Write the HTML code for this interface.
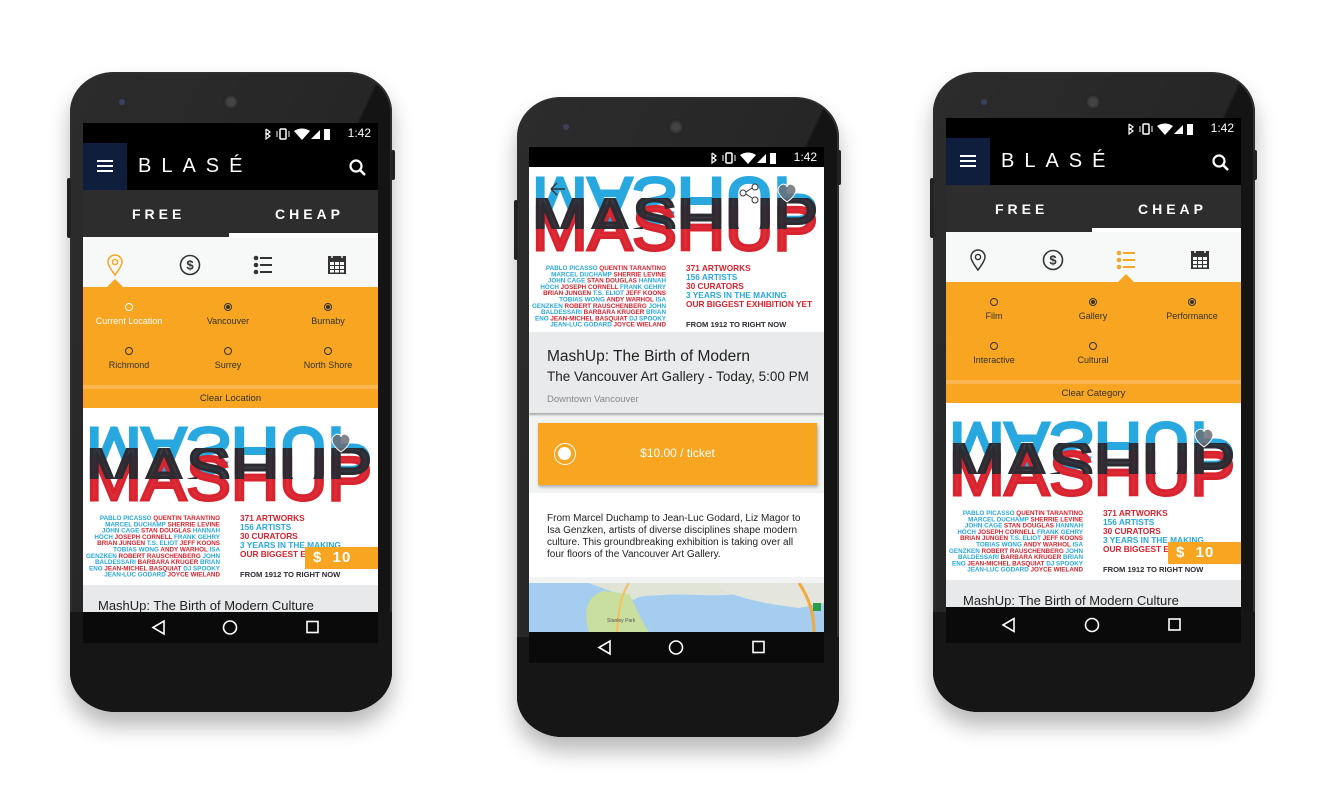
<!DOCTYPE html>
<html><head><meta charset="utf-8">
<style>
*{margin:0;padding:0;box-sizing:border-box}
body{width:1325px;height:803px;background:#fff;position:relative;overflow:hidden;font-family:"Liberation Sans",sans-serif}
.phone{position:absolute;width:322px;height:640px;border-radius:44px 44px 46px 46px/40px 40px 40px 40px;background:linear-gradient(115deg,#2c2c2c 0%,#262626 50%,#141414 50.5%,#141414 100%);box-shadow:0 14px 22px rgba(0,0,0,.28),inset 0 0 0 2px #2e2e2e}
.phone .bot{position:absolute;left:0;right:0;bottom:0;height:100px;border-radius:0 0 46px 46px/0 0 40px 40px;background:#161616}
.spk{position:absolute;width:16px;height:16px;border-radius:50%;background:radial-gradient(#444 30%,#222 70%)}
.cam{position:absolute;width:6px;height:6px;border-radius:50%;background:#3a4060}
.btn{position:absolute;width:4px;background:#222;border-radius:2px}
.scr{position:absolute;width:295px;overflow:hidden;background:#fff}
.abs{position:absolute}
.sb{position:absolute;left:0;top:0;width:295px;height:20px;background:#000;color:#fff;font-size:12px}
.sb .t{position:absolute;right:7px;top:3px}
.ab{position:absolute;left:0;top:20px;width:295px;height:47px;background:#000}
.ham{position:absolute;left:0;top:0;width:44px;height:47px;background:#0f1e3c}
.ham i{position:absolute;left:14px;width:16px;height:2px;background:#fff}
.logo{position:absolute;left:55px;top:12px;color:#fff;font-size:20px;letter-spacing:10px;font-weight:normal}
.tabs{position:absolute;left:0;top:67px;width:295px;height:47px;background:#2d2d2d;color:#fff;font-weight:bold;font-size:14px;letter-spacing:4px}
.tabs span{position:absolute;top:16px}
.tabs .ul{position:absolute;left:146px;bottom:0;width:149px;height:4px;background:#fff}
.ic{position:absolute;left:0;top:114px;width:295px;height:50px;background:#f7f8f8}
.or{position:absolute;left:0;top:164px;width:295px;height:121px;background:#f8a521}
.opt{position:absolute;width:100px;text-align:center;font-size:9px;color:#333}
.opt b{display:block;margin:0 auto 5px;width:8px;height:8px;border:1px solid #333;border-radius:50%;position:relative}
.opt b.on:after{content:"";position:absolute;left:1px;top:1px;width:4px;height:4px;border-radius:50%;background:#333}
.clr{position:absolute;left:0;top:98px;width:295px;height:23px;border-top:4px solid #fab451;text-align:center;font-size:9.5px;color:#333;line-height:19px}
.nav{position:absolute;left:0;width:295px;height:31px;background:#0a0a0a}
.ttl{position:absolute;left:0;width:295px;background:#e8e9ea;font-size:13px;color:#222}
.tag{position:absolute;background:#f8a521;color:#fff;font-weight:bold;font-size:15px;letter-spacing:1px}
</style></head><body>

<!-- ============ PHONE 1 ============ -->
<div class="phone" style="left:70px;top:72px"><div class="bot"></div>
<div class="cam" style="left:49px;top:27px"></div><div class="spk" style="left:153px;top:22px"></div>
</div>
<div class="btn" style="left:391px;top:150px;height:30px"></div>
<div class="btn" style="left:67px;top:178px;height:60px"></div>
<div class="scr" style="left:83px;top:123px;height:520px">
 <div class="sb"><svg class="abs" style="left:178px;top:4px" width="70" height="13"><path d="M5 2l4 3-4 3M5 2v10l4-3-4-3" stroke="#fff" fill="none" stroke-width="1.2"/><rect x="19" y="2" width="6" height="10" rx="1" fill="none" stroke="#fff" stroke-width="1.5"/><path d="M16 4v6M28 4v6" stroke="#fff"/><path d="M33 4q8-5 16 0l-8 9z" fill="#fff"/><path d="M50 12l9-9v9z" fill="#fff"/><rect x="63" y="2" width="6" height="11" fill="#fff"/></svg><span class="t">1:42</span></div>
 <div class="ab"><div class="ham"><i style="top:17px"></i><i style="top:22px"></i><i style="top:27px"></i></div><div class="logo">BLASÉ</div>
 <svg class="abs" style="left:266px;top:16px" width="18" height="18"><circle cx="7" cy="7" r="5.5" stroke="#fff" stroke-width="2.2" fill="none"/><path d="M11 11l5 5" stroke="#fff" stroke-width="2.5"/></svg></div>
 <div class="tabs"><span style="left:49px">FREE</span><span style="left:192px">CHEAP</span><div class="ul"></div></div>
 <div class="ic">
  <svg class="abs" style="left:22px;top:16px" width="20" height="24"><path d="M10 22C4 14 3 11 3 9a7 7 0 0114 0c0 2-1 5-7 13z" stroke="#f8a521" stroke-width="1.5" fill="none"/><circle cx="10" cy="9" r="2.6" stroke="#f8a521" stroke-width="1.4" fill="none"/></svg>
  <svg class="abs" style="left:96px;top:17px" width="22" height="22"><circle cx="11" cy="11" r="9.5" stroke="#333" stroke-width="1.6" fill="none"/><text x="11" y="15.5" text-anchor="middle" font-size="13" font-weight="bold" fill="#333" font-family="Liberation Sans">$</text></svg>
  <svg class="abs" style="left:170px;top:18px" width="20" height="20"><circle cx="3" cy="3" r="2.3" fill="#333"/><circle cx="3" cy="10" r="2.3" fill="#333"/><circle cx="3" cy="17" r="2.3" fill="#333"/><rect x="7" y="2" width="12" height="2" fill="#333"/><rect x="7" y="9" width="12" height="2" fill="#333"/><rect x="7" y="16" width="12" height="2" fill="#333"/></svg>
  <svg class="abs" style="left:244px;top:16px" width="20" height="22"><rect x="1" y="3" width="18" height="18" fill="#333"/><g fill="#f7f8f8"><rect x="3" y="9" width="4" height="3"/><rect x="8" y="9" width="4" height="3"/><rect x="13" y="9" width="4" height="3"/><rect x="3" y="13" width="4" height="3"/><rect x="8" y="13" width="4" height="3"/><rect x="13" y="13" width="4" height="3"/><rect x="3" y="17" width="4" height="2.5"/><rect x="8" y="17" width="4" height="2.5"/><rect x="13" y="17" width="4" height="2.5"/></g><path d="M5 0v5M15 0v5" stroke="#f7f8f8" stroke-width="1.5"/></svg>
  <div class="abs" style="left:24px;top:42px;border:8px solid transparent;border-bottom:8px solid #f8a521;border-top:0"></div>
 </div>
 <div class="or">
  <div class="opt" style="left:-4px;top:16px;color:#fff"><b style="border-color:#fff;border-radius:50%"></b>Current Location</div>
  <div class="opt" style="left:95px;top:16px"><b class="on"></b>Vancouver</div>
  <div class="opt" style="left:195px;top:16px"><b class="on"></b>Burnaby</div>
  <div class="opt" style="left:-4px;top:60px"><b></b>Richmond</div>
  <div class="opt" style="left:95px;top:60px"><b></b>Surrey</div>
  <div class="opt" style="left:195px;top:60px"><b></b>North Shore</div>
  <div class="clr">Clear Location</div>
 </div>
 <div class="abs" style="left:0;top:287px">
  <svg width="295" height="175" viewBox="0 0 295 175" id="poster">
   <defs><clipPath id="cb"><rect x="0" y="38" width="295" height="31"/></clipPath></defs>
   <g font-family="Liberation Sans" font-weight="normal" stroke-width="3">
    <text x="3" y="47" transform="translate(0,65) scale(1,-1)" font-size="64" fill="#29a8e0" stroke="#29a8e0" textLength="286" lengthAdjust="spacingAndGlyphs">MASHUP</text>
    <text x="3" y="90" font-size="62" fill="#d9232e" stroke="#d9232e" fill-opacity=".95" textLength="286" lengthAdjust="spacingAndGlyphs">MASHUP</text>
    <text x="3" y="80" font-size="62" fill="#2c2b32" stroke="#2c2b32" fill-opacity=".92" clip-path="url(#cb)" textLength="286" lengthAdjust="spacingAndGlyphs">MASHUP</text>
   </g>
   <path d="M258 42c-10-7-11-14-6-17 3-2 6 0 6 2 0-2 3-4 6-2 5 3 4 10-6 17z" fill="#6a6f78" fill-opacity=".85" stroke="#fff" stroke-width="1"/>
   <g font-family="Liberation Sans" font-weight="bold" font-size="6.3" text-anchor="end">
    <text x="137" y="110"><tspan fill="#29a8e0">PABLO PICASSO </tspan><tspan fill="#d9232e">QUENTIN TARANTINO</tspan></text>
    <text x="137" y="116.3"><tspan fill="#29a8e0">MARCEL DUCHAMP </tspan><tspan fill="#d9232e">SHERRIE LEVINE</tspan></text>
    <text x="137" y="122.6"><tspan fill="#29a8e0">JOHN CAGE </tspan><tspan fill="#d9232e">STAN DOUGLAS </tspan><tspan fill="#29a8e0">HANNAH</tspan></text>
    <text x="137" y="128.9"><tspan fill="#29a8e0">HÖCH </tspan><tspan fill="#d9232e">JOSEPH CORNELL </tspan><tspan fill="#29a8e0">FRANK GEHRY</tspan></text>
    <text x="137" y="135.2"><tspan fill="#d9232e">BRIAN JUNGEN </tspan><tspan fill="#29a8e0">T.S. ELIOT </tspan><tspan fill="#d9232e">JEFF KOONS</tspan></text>
    <text x="137" y="141.5"><tspan fill="#29a8e0">TOBIAS WONG </tspan><tspan fill="#d9232e">ANDY WARHOL </tspan><tspan fill="#29a8e0">ISA</tspan></text>
    <text x="137" y="147.8"><tspan fill="#29a8e0">GENZKEN </tspan><tspan fill="#d9232e">ROBERT RAUSCHENBERG </tspan><tspan fill="#29a8e0">JOHN</tspan></text>
    <text x="137" y="154.1"><tspan fill="#29a8e0">BALDESSARI </tspan><tspan fill="#d9232e">BARBARA KRUGER </tspan><tspan fill="#29a8e0">BRIAN</tspan></text>
    <text x="137" y="160.4"><tspan fill="#29a8e0">ENO </tspan><tspan fill="#d9232e">JEAN-MICHEL BASQUIAT </tspan><tspan fill="#29a8e0">DJ SPOOKY</tspan></text>
    <text x="137" y="166.7"><tspan fill="#29a8e0">JEAN-LUC GODARD </tspan><tspan fill="#d9232e">JOYCE WIELAND</tspan></text>
   </g>
   <g font-family="Liberation Sans" font-weight="bold" font-size="8.3">
    <text x="157" y="111" fill="#d9232e">371 ARTWORKS</text>
    <text x="157" y="120" fill="#29a8e0">156 ARTISTS</text>
    <text x="157" y="129" fill="#d9232e">30 CURATORS</text>
    <text x="157" y="138" fill="#29a8e0">3 YEARS IN THE MAKING</text>
    <text x="157" y="147" fill="#d9232e">OUR BIGGEST EXHIBITION YET</text>
    <text x="157" y="167" fill="#2c2b32" font-size="7.6">FROM 1912 TO RIGHT NOW</text>
   </g>
  </svg>
 </div>
 <div class="tag" style="left:222px;top:424px;width:73px;height:22px;padding:2px 0 0 8px">$&nbsp;&nbsp;10</div>
 <div class="ttl" style="top:462px;height:28px;padding:13px 0 0 15px">MashUp: The Birth of Modern Culture</div>
 <div class="nav" style="top:489px"><svg width="295" height="31"><path d="M70 15.5l11-6.5v13z" stroke="#fff" stroke-width="1.6" fill="none"/><circle cx="147" cy="15.5" r="6.5" stroke="#fff" stroke-width="1.6" fill="none"/><rect x="224" y="9.5" width="11" height="11" stroke="#fff" stroke-width="1.6" fill="none"/></svg></div>
</div>

<!-- ============ PHONE 2 ============ -->
<div class="phone" style="left:517px;top:97px"><div class="bot"></div>
<div class="cam" style="left:46px;top:27px"></div><div class="spk" style="left:151px;top:22px"></div>
</div>
<div class="btn" style="left:837px;top:150px;height:35px"></div>
<div class="btn" style="left:514px;top:200px;height:60px"></div>
<div class="scr" style="left:529px;top:147px;height:516px;background:#f2f3f3">
 <div class="sb"><svg class="abs" style="left:178px;top:4px" width="70" height="13"><path d="M5 2l4 3-4 3M5 2v10l4-3-4-3" stroke="#fff" fill="none" stroke-width="1.2"/><rect x="19" y="2" width="6" height="10" rx="1" fill="none" stroke="#fff" stroke-width="1.5"/><path d="M16 4v6M28 4v6" stroke="#fff"/><path d="M33 4q8-5 16 0l-8 9z" fill="#fff"/><path d="M50 12l9-9v9z" fill="#fff"/><rect x="63" y="2" width="6" height="11" fill="#fff"/></svg><span class="t">1:42</span></div>
 <div class="abs" style="left:0;top:20px;width:295px;height:165px;background:#fff">
  <svg width="295" height="165" viewBox="0 7 295 165" preserveAspectRatio="none"><use href="#poster"/></svg>
  <svg class="abs" style="left:0;top:0" width="295" height="60"><path d="M36 22H22m0 0l6-6m-6 6l6 6" stroke="#333" stroke-width="1.4" fill="none"/><circle cx="226" cy="20" r="3" stroke="#333" fill="#fff"/><circle cx="214" cy="26" r="3" stroke="#333" fill="#fff"/><circle cx="226" cy="33" r="3" stroke="#333" fill="#fff"/><path d="M217 25l6-4M217 27l6 4" stroke="#333"/></svg>
 </div>
 <div class="abs" style="left:0;top:185px;width:295px;height:81px;background:#e9eaeb;box-shadow:0 2px 2px rgba(0,0,0,.3)">
  <div class="abs" style="left:18px;top:16px;font-size:15.5px;color:#222">MashUp: The Birth of Modern</div>
  <div class="abs" style="left:18px;top:37px;font-size:13.5px;color:#222">The Vancouver Art Gallery - Today, 5:00 PM</div>
  <div class="abs" style="left:18px;top:62px;font-size:9.5px;color:#888">Downtown Vancouver</div>
 </div>
 <div class="abs" style="left:9px;top:276px;width:279px;height:62px;background:#f8a521;box-shadow:1px 2px 3px rgba(0,0,0,.3)">
  <div class="abs" style="left:16px;top:20px;width:22px;height:22px;border:1.5px solid #fff;border-radius:50%"><div class="abs" style="left:3px;top:3px;width:13px;height:13px;border-radius:50%;background:#fff"></div></div>
  <div class="abs" style="left:0;width:279px;top:23px;text-align:center;font-size:12px;color:#fff;padding-left:0">$10.00 / ticket</div>
 </div>
 <div class="abs" style="left:0;top:346px;width:295px;height:84px;background:#fff;font-size:10px;line-height:12px;color:#222;padding:20px 14px 0 18px">From Marcel Duchamp to Jean-Luc Godard, Liz Magor to Isa Genzken, artists of diverse disciplines shape modern culture. This groundbreaking exhibition is taking over all four floors of the Vancouver Art Gallery.</div>
 <div class="abs" style="left:0;top:436px;width:295px;height:49px;background:#a4cdf0;overflow:hidden">
  <svg width="295" height="49"><path d="M0 0h295v10c-30 2-60-4-80 0-30 5-60 0-80 2-15 1-25 0-30 5L60 0z" fill="#dfe4d6"/><path d="M75 8c-20 5-20 25-15 41h60c-10-15-15-30-20-38z" fill="#c9df9f"/><path d="M190 5c20 10 40 15 80 20l25-5V0H190z" fill="#e4e6de"/><path d="M270 0c10 15 15 30 15 49" stroke="#f3a93b" stroke-width="3" fill="none"/><path d="M100 0c-10 15-10 30-12 49" stroke="#f7c05b" stroke-width="2" fill="none"/><rect x="284" y="20" width="8" height="8" fill="#2a9d4a"/><text x="78" y="39" font-size="5" fill="#555">Stanley Park</text></svg>
 </div>
 <div class="nav" style="top:485px"><svg width="295" height="31"><path d="M70 15.5l11-6.5v13z" stroke="#fff" stroke-width="1.6" fill="none"/><circle cx="147" cy="15.5" r="6.5" stroke="#fff" stroke-width="1.6" fill="none"/><rect x="224" y="9.5" width="11" height="11" stroke="#fff" stroke-width="1.6" fill="none"/></svg></div>
</div>

<!-- ============ PHONE 3 ============ -->
<div class="phone" style="left:933px;top:72px"><div class="bot"></div>
<div class="cam" style="left:48px;top:27px"></div><div class="spk" style="left:152px;top:22px"></div>
</div>
<div class="btn" style="left:1253px;top:150px;height:30px"></div>
<div class="btn" style="left:930px;top:178px;height:60px"></div>
<div class="scr" style="left:946px;top:118px;height:525px">
 <div class="sb"><svg class="abs" style="left:178px;top:4px" width="70" height="13"><path d="M5 2l4 3-4 3M5 2v10l4-3-4-3" stroke="#fff" fill="none" stroke-width="1.2"/><rect x="19" y="2" width="6" height="10" rx="1" fill="none" stroke="#fff" stroke-width="1.5"/><path d="M16 4v6M28 4v6" stroke="#fff"/><path d="M33 4q8-5 16 0l-8 9z" fill="#fff"/><path d="M50 12l9-9v9z" fill="#fff"/><rect x="63" y="2" width="6" height="11" fill="#fff"/></svg><span class="t">1:42</span></div>
 <div class="ab"><div class="ham"><i style="top:17px"></i><i style="top:22px"></i><i style="top:27px"></i></div><div class="logo">BLASÉ</div>
 <svg class="abs" style="left:266px;top:16px" width="18" height="18"><circle cx="7" cy="7" r="5.5" stroke="#fff" stroke-width="2.2" fill="none"/><path d="M11 11l5 5" stroke="#fff" stroke-width="2.5"/></svg></div>
 <div class="tabs"><span style="left:49px">FREE</span><span style="left:192px">CHEAP</span><div class="ul"></div></div>
 <div class="ic">
  <svg class="abs" style="left:22px;top:16px" width="20" height="24"><path d="M10 22C4 14 3 11 3 9a7 7 0 0114 0c0 2-1 5-7 13z" stroke="#333" stroke-width="1.5" fill="none"/><circle cx="10" cy="9" r="2.6" stroke="#333" stroke-width="1.4" fill="none"/></svg>
  <svg class="abs" style="left:96px;top:17px" width="22" height="22"><circle cx="11" cy="11" r="9.5" stroke="#333" stroke-width="1.6" fill="none"/><text x="11" y="15.5" text-anchor="middle" font-size="13" font-weight="bold" fill="#333" font-family="Liberation Sans">$</text></svg>
  <svg class="abs" style="left:170px;top:18px" width="20" height="20"><circle cx="3" cy="3" r="2.3" fill="#f8a521"/><circle cx="3" cy="10" r="2.3" fill="#f8a521"/><circle cx="3" cy="17" r="2.3" fill="#f8a521"/><rect x="7" y="2" width="12" height="2" fill="#f8a521"/><rect x="7" y="9" width="12" height="2" fill="#f8a521"/><rect x="7" y="16" width="12" height="2" fill="#f8a521"/></svg>
  <svg class="abs" style="left:244px;top:16px" width="20" height="22"><rect x="1" y="3" width="18" height="18" fill="#333"/><g fill="#f7f8f8"><rect x="3" y="9" width="4" height="3"/><rect x="8" y="9" width="4" height="3"/><rect x="13" y="9" width="4" height="3"/><rect x="3" y="13" width="4" height="3"/><rect x="8" y="13" width="4" height="3"/><rect x="13" y="13" width="4" height="3"/><rect x="3" y="17" width="4" height="2.5"/><rect x="8" y="17" width="4" height="2.5"/><rect x="13" y="17" width="4" height="2.5"/></g><path d="M5 0v5M15 0v5" stroke="#f7f8f8" stroke-width="1.5"/></svg>
  <div class="abs" style="left:172px;top:42px;border:8px solid transparent;border-bottom:8px solid #f8a521;border-top:0"></div>
 </div>
 <div class="or">
  <div class="opt" style="left:-2px;top:16px"><b></b>Film</div>
  <div class="opt" style="left:97px;top:16px"><b class="on"></b>Gallery</div>
  <div class="opt" style="left:196px;top:16px"><b class="on"></b>Performance</div>
  <div class="opt" style="left:-2px;top:60px"><b></b>Interactive</div>
  <div class="opt" style="left:97px;top:60px"><b></b>Cultural</div>
  <div class="clr">Clear Category</div>
 </div>
 <div class="abs" style="left:0;top:287px"><svg width="295" height="175" viewBox="0 0 295 175"><use href="#poster"/></svg></div>
 <div class="tag" style="left:222px;top:424px;width:73px;height:22px;padding:2px 0 0 8px">$&nbsp;&nbsp;10</div>
 <div class="ttl" style="top:462px;height:28px;padding:13px 0 0 17px">MashUp: The Birth of Modern Culture</div>
 <div class="nav" style="top:489px;height:36px"><svg width="295" height="36"><path d="M57 18l11-6.5v13z" stroke="#fff" stroke-width="1.6" fill="none"/><circle cx="146" cy="18" r="6.5" stroke="#fff" stroke-width="1.6" fill="none"/><rect x="223" y="12" width="11" height="11" stroke="#fff" stroke-width="1.6" fill="none"/></svg></div>
</div>
</body></html>
